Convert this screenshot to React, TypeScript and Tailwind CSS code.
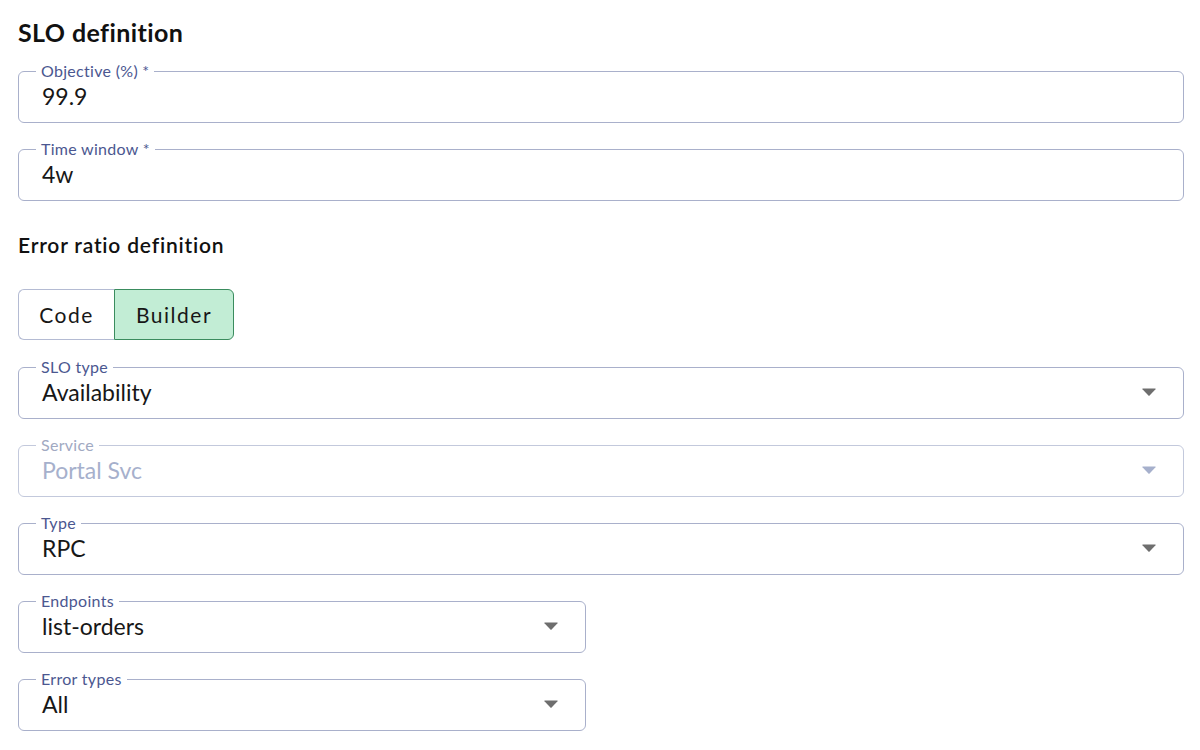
import React from "react";

const font = { fontFamily: "Lato, 'Noto Sans', sans-serif" };

type FieldProps = {
  label: string;
  value: string;
  select?: boolean;
  disabled?: boolean;
  narrow?: boolean;
};

const Caret = ({ disabled }: { disabled?: boolean }) => (
  <svg width="14" height="8" viewBox="0 0 14 8" className="shrink-0">
    <path
      d="M0.8 0.5 L13.2 0.5 Q14 0.5 13.5 1.2 L7.6 7.4 Q7 8 6.4 7.4 L0.5 1.2 Q0 0.5 0.8 0.5 Z"
      fill={disabled ? "#a6b0cc" : "#6e6e6e"}
    />
  </svg>
);

const Field = ({ label, value, select, disabled, narrow }: FieldProps) => (
  <fieldset
    className={`border rounded-[6px] pl-[23px] pr-[27px] pb-[13px] ${
      narrow ? "w-[568px]" : "w-full"
    } ${disabled ? "border-[#c3c9dc]" : "border-[#a9b0cb]"}`}
  >
    <legend
      className={`ml-[-6px] px-[5px] text-[16px] leading-[18px] tracking-[0.3px] ${
        disabled ? "text-[#a1a9c2]" : "text-[#4b5790]"
      }`}
    >
      {label}
    </legend>
    <div className="flex items-center justify-between mt-[3px]">
      <span
        className={`text-[23px] leading-[26px] ${
          disabled ? "text-[#a6b0cc]" : "text-[#171717]"
        }`}
      >
        {value}
      </span>
      {select && <Caret disabled={disabled} />}
    </div>
  </fieldset>
);

export default function App() {
  return (
    <div
      className="w-[1200px] h-[750px] bg-white pl-[18px] pr-[16px] pt-[16px] overflow-hidden"
      style={font}
    >
      <h2 className="text-[25px] leading-[32px] font-bold tracking-[0.4px] text-[#111]">
        SLO definition
      </h2>
      <div className="flex flex-col gap-[17px] mt-[14px]">
        <Field label="Objective (%) *" value="99.9" />
        <Field label="Time window *" value="4w" />
      </div>
      <h3 className="text-[21px] leading-[28px] font-semibold tracking-[0.8px] text-[#111] mt-[30px]">
        Error ratio definition
      </h3>
      <div className="flex mt-[30px] h-[51px] w-[216px] text-[21px] tracking-[1.5px] text-[#171717]">
        <button className="w-[96px] border border-r-0 border-[#b4bbd3] rounded-l-[6px] bg-white">
          Code
        </button>
        <button className="flex-1 border border-[#3a8c5e] rounded-r-[6px] bg-[#c2edd5]">
          Builder
        </button>
      </div>
      <div className="flex flex-col gap-[17px] mt-[18px]">
        <Field label="SLO type" value="Availability" select />
        <Field label="Service" value="Portal Svc" select disabled />
        <Field label="Type" value="RPC" select />
        <Field label="Endpoints" value="list-orders" select narrow />
        <Field label="Error types" value="All" select narrow />
      </div>
    </div>
  );
}
